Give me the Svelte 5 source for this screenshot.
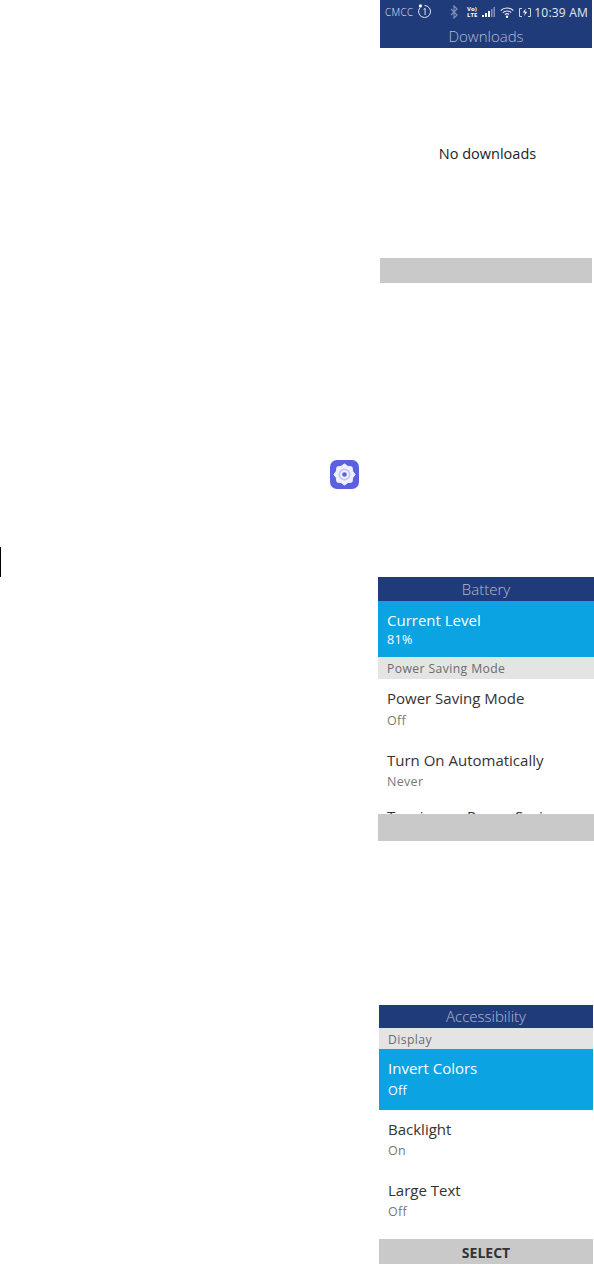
<script>
  const batteryRows = [
    { title: 'Power Saving Mode', value: 'Off' },
    { title: 'Turn On Automatically', value: 'Never' }
  ]
  const accessRows = [
    { title: 'Backlight', value: 'On' },
    { title: 'Large Text', value: 'Off' }
  ]

  // eight-toothed gear outline for the settings icon
  const gear = Array.from({ length: 16 }, (_, i) => {
    const a = ((i * 22.5 - 90) * Math.PI) / 180
    const r = i % 2 ? 8.8 : 10.6
    return `${(14.5 + r * Math.cos(a)).toFixed(2)},${(14.5 + r * Math.sin(a)).toFixed(2)}`
  }).join(' ')
</script>

<div class="page">
  <section class="screen downloads">
    <div class="bar status">
      <span class="carrier">CMCC</span>
      <svg class="alarm" width="15" height="15" viewBox="0 0 15 15">
        <path d="M7.500 1.500a6 6 0 1 1-4.600 2.200" fill="none" stroke="#dfe5f2" stroke-width="1"/>
        <circle cx="3.400" cy="1.900" r="1.600" fill="#fff"/>
        <path d="M6.600 5.400l1.500-1v6.600" fill="none" stroke="#dfe5f2" stroke-width="1"/>
      </svg>
      <span class="status-right">
        <svg class="bt" width="9" height="14" viewBox="0 0 9 14">
          <path d="M1 4l6 6-3 3V1l3 3-6 6" fill="none" stroke="#7f8fb5" stroke-width="1.200"/>
        </svg>
        <span class="volte">Vo)<br />LTE</span>
        <svg width="13" height="10" viewBox="0 0 13 10">
          <path d="M0 8h2v2H0zM3 6h2v4H3zM6 4h2v6H6z" fill="#fff"/>
          <path d="M9 2h1.500v8H9zM11.500 0H13v10h-1.500z" fill="#8494b8"/>
        </svg>
        <svg width="14" height="11" viewBox="0 0 14 11">
          <path d="M.7 3.500a9 9 0 0 1 12.600 0M2.800 5.700a6 6 0 0 1 8.400 0M4.900 7.700a3 3 0 0 1 4.200 0" fill="none" stroke="#e8ecf5" stroke-width="1.100"/>
          <circle cx="7" cy="9.700" r="1.200" fill="#fff"/>
        </svg>
        <svg width="13" height="10" viewBox="0 0 13 10">
          <path d="M3 1.500H.5v8H3M9 1.500h2.500v8H9" fill="none" stroke="#c9d1e4"/>
          <path d="M6.800 1.500L3.800 5.600h2.200L5 9l3.200-4.200H6z" fill="#fff"/>
        </svg>
        <span class="clock">10:39 AM</span>
      </span>
    </div>
    <div class="bar title">Downloads</div>
    <div class="empty">No downloads</div>
    <div class="footer"></div>
  </section>

  <div class="settings-icon">
    <svg width="29" height="29" viewBox="0 0 29 29">
      <rect width="29" height="29" rx="7" fill="#5a60e0"/>
      <polygon points={gear} fill="#f1f1fd" stroke="#f1f1fd" stroke-width="1" stroke-linejoin="round"/>
      <circle cx="14.500" cy="14.500" r="6" fill="#c5c6f5"/>
      <circle cx="14.500" cy="14.500" r="4.300" fill="#f1f1fd"/>
      <circle cx="14.500" cy="14.500" r="2.300" fill="#5a60e0"/>
    </svg>
  </div>

  <div class="cursor"></div>

  <section class="screen battery">
    <div class="bar title">Battery</div>
    <div class="row selected first">
      <div class="row-title">Current Level</div>
      <div class="row-value">81%</div>
    </div>
    <div class="section-head tall">Power Saving Mode</div>
    <div class="list">
      {#each batteryRows as row}
        <div class="row wide">
          <div class="row-title">{row.title}</div>
          <div class="row-value">{row.value}</div>
        </div>
      {/each}
      <div class="row peek">
        <div class="row-title">Turning on Power Saving</div>
      </div>
    </div>
    <div class="footer tall"></div>
  </section>

  <section class="screen access">
    <div class="bar title thin">Accessibility</div>
    <div class="section-head">Display</div>
    <div class="row selected invert">
      <div class="row-title">Invert Colors</div>
      <div class="row-value">Off</div>
    </div>
    <div class="list">
      {#each accessRows as row}
        <div class="row">
          <div class="row-title">{row.title}</div>
          <div class="row-value">{row.value}</div>
        </div>
      {/each}
    </div>
    <div class="footer">SELECT</div>
  </section>
</div>

<style>
  :global(body) {
    margin: 0;
    background: #fff;
  }

  .page {
    width: 594px;
    height: 1264px;
    overflow: hidden;
    font-family: "Open Sans", "Liberation Sans", sans-serif;
    color: #3a3a3a;
  }

  .screen {
    display: flex;
    flex-direction: column;
    overflow: hidden;
  }

  .downloads {
    width: 212px;
    height: 283px;
    margin-left: 380px;
  }

  .battery {
    width: 216px;
    height: 264px;
    margin-left: 378px;
  }

  .access {
    width: 214px;
    height: 259px;
    margin-left: 379px;
    margin-top: 164px;
  }

  .bar {
    background: #1f3b7a;
    color: #b4bdd3;
    flex: none;
  }

  .status {
    height: 24px;
    display: flex;
    align-items: center;
    padding: 0 4px 0 5px;
    font-size: 10px;
    font-weight: 300;
    color: #e4e8f2;
  }

  .carrier {
    letter-spacing: 0.3px;
  }

  .alarm {
    margin-left: 4px;
    margin-top: -2px;
  }

  .status-right {
    margin-left: auto;
    display: flex;
    align-items: center;
    gap: 5px;
  }

  .bt {
    margin-right: 3px;
  }

  .volte {
    font-size: 6px;
    font-weight: 700;
    line-height: 6px;
    color: #fff;
  }

  .clock {
    font-size: 12px;
    font-weight: 400;
    letter-spacing: 0.2px;
    white-space: nowrap;
    margin-left: -3px;
  }

  .title {
    height: 24px;
    line-height: 24px;
    text-align: center;
    font-size: 15px;
    font-weight: 300;
  }

  .title.thin {
    height: 23px;
    line-height: 22px;
  }

  .empty {
    flex: 1;
    display: flex;
    align-items: center;
    justify-content: center;
    font-size: 14.500px;
    color: #222;
    padding-left: 3px;
  }

  .footer {
    flex: none;
    height: 25px;
    background: #c9c9c9;
    text-align: center;
    line-height: 27px;
    font-size: 14px;
    font-weight: 700;
    color: #333;
  }

  .footer.tall {
    height: 27px;
  }

  .section-head {
    flex: none;
    height: 21px;
    line-height: 24px;
    background: #e4e4e4;
    padding-left: 9px;
    font-size: 12.200px;
    letter-spacing: 0.4px;
    color: #6b6b6b;
  }

  .section-head.tall {
    height: 22px;
  }

  .list {
    flex: 1;
    min-height: 0;
    overflow: hidden;
  }

  .row {
    height: 61px;
    padding: 7px 9px 0;
    box-sizing: border-box;
  }

  .row.wide {
    height: 62px;
  }

  .row.peek {
    margin-top: -6px;
  }

  .row.selected {
    flex: none;
    background: #0ba3e2;
    color: #fff;
  }

  .row.first {
    height: 56px;
  }

  .row-title {
    font-size: 15px;
    line-height: 24px;
    color: #333;
    white-space: nowrap;
  }

  .row-value {
    font-size: 12.500px;
    line-height: 18px;
    letter-spacing: 0.3px;
    margin-top: 1px;
    color: #777;
  }

  .wide .row-value,
  .invert .row-value {
    margin-top: 2px;
  }

  .wide + .wide .row-value {
    margin-top: 1px;
  }

  .first .row-value {
    margin-top: 0;
    line-height: 16px;
  }

  .selected .row-title,
  .selected .row-value {
    color: #fff;
  }

  .settings-icon {
    height: 29px;
    margin-top: 177px;
    padding-left: 330px;
  }

  .cursor {
    width: 1px;
    height: 30px;
    margin-top: 58px;
    background: #000;
  }
</style>
